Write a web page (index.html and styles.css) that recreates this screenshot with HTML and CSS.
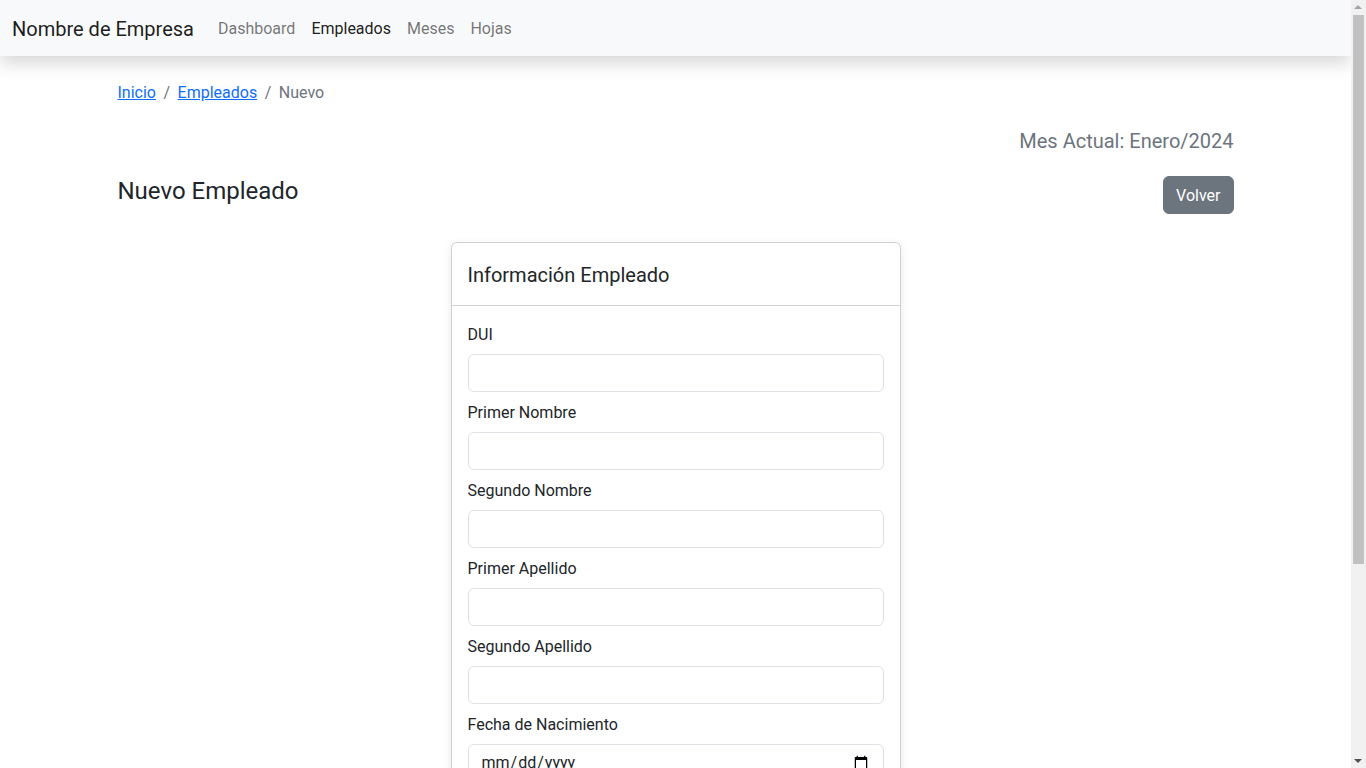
FILE: index.html
```html
<!DOCTYPE html>
<html lang="es">
<head>
<meta charset="utf-8">
<title>Nuevo Empleado</title>
<link rel="stylesheet" href="styles.css">
</head>
<body>
<nav class="navbar">
  <a class="brand" href="#">Nombre de Empresa</a>
  <ul class="nav">
    <li><a class="nav-link" href="#">Dashboard</a></li>
    <li><a class="nav-link active" href="#">Empleados</a></li>
    <li><a class="nav-link" href="#">Meses</a></li>
    <li><a class="nav-link" href="#">Hojas</a></li>
  </ul>
</nav>
<main class="container">
  <ol class="breadcrumb">
    <li><a href="#">Inicio</a></li>
    <li class="sep">/</li>
    <li><a href="#">Empleados</a></li>
    <li class="sep">/</li>
    <li class="current">Nuevo</li>
  </ol>
  <div class="month">Mes Actual: Enero/2024</div>
  <div class="title-row">
    <h1 class="title">Nuevo Empleado</h1>
    <a class="btn-secondary" href="#">Volver</a>
  </div>
  <form class="card">
    <div class="card-header"><h2>Información Empleado</h2></div>
    <div class="card-body">
      <div class="field"><label>DUI</label><input class="control" type="text"></div>
      <div class="field"><label>Primer Nombre</label><input class="control" type="text"></div>
      <div class="field"><label>Segundo Nombre</label><input class="control" type="text"></div>
      <div class="field"><label>Primer Apellido</label><input class="control" type="text"></div>
      <div class="field"><label>Segundo Apellido</label><input class="control" type="text"></div>
      <div class="field"><label>Fecha de Nacimiento</label><input class="control" type="date"></div>
      <div class="field"><label>Salario</label><input class="control" type="number"></div>
      <button class="btn-primary" type="button">Guardar</button>
    </div>
  </form>
</main>
<div class="scrollbar" aria-hidden="true">
  <span class="arrow-up"></span>
  <span class="thumb"></span>
  <span class="arrow-down"></span>
</div>
</body>
</html>
```
FILE: styles.css
```css
* { box-sizing: border-box; }
html, body { margin: 0; }
body {
  font-family: Roboto, "Noto Sans", sans-serif;
  font-size: 16px;
  line-height: 1.5;
  color: #212529;
  background: #fff;
  margin-right: 15px;
}
.navbar {
  display: flex;
  align-items: center;
  height: 56px;
  padding: 9px 12px 7px;
  background: #f8f9fa;
  box-shadow: 0 .5rem 1rem rgba(0,0,0,.15);
  position: relative;
  z-index: 2;
}
.brand {
  font-size: 20px;
  line-height: 30px;
  color: rgba(0,0,0,.9);
  text-decoration: none;
  margin-right: 16px;
}
.nav { display: flex; list-style: none; margin: 0; padding: 0; }
.nav-link {
  display: block;
  padding: 8px;
  color: rgba(0,0,0,.55);
  text-decoration: none;
}
.nav-link.active { color: rgba(0,0,0,.9); }
.container {
  max-width: 1140px;
  margin: 0 auto;
  padding: 25px 12px 48px;
}
.breadcrumb {
  display: flex;
  list-style: none;
  margin: 0 0 24px;
  padding: 0;
}
.breadcrumb a { color: #0d6efd; text-decoration: underline; }
.breadcrumb .sep { color: #6c757d; padding: 0 7.5px; }
.breadcrumb .current { color: #6c757d; }
.month {
  text-align: right;
  font-size: 20px;
  line-height: 24px;
  color: #6c757d;
  margin-bottom: 23px;
}
.title-row {
  display: flex;
  justify-content: space-between;
  align-items: flex-start;
  margin-bottom: 28px;
}
.title {
  margin: 0;
  padding-top: 1px;
  font-size: 24px;
  font-weight: 400;
  line-height: 28.8px;
}
.btn-secondary {
  display: inline-block;
  padding: 7px 12px 5px;
  line-height: 24px;
  border: 1px solid #6c757d;
  background: #6c757d;
  color: #fff;
  border-radius: 6px;
  text-decoration: none;
}
.card {
  width: 450px;
  margin: 0 auto;
  border: 1px solid rgba(0,0,0,.175);
  border-radius: 6px;
  background: #fff;
  box-shadow: 0 .125rem .5rem rgba(0,0,0,.09);
}
.card-header {
  padding: 20px 16px 18px;
  border-bottom: 1px solid rgba(0,0,0,.175);
}
.card-header h2 {
  margin: 0;
  font-size: 20px;
  font-weight: 400;
  line-height: 24px;
}
.card-body { padding: 16px; }
.field { margin-bottom: 8px; }
.field label { display: block; padding-top: 1px; margin-bottom: 7px; }
.control {
  display: block;
  width: 100%;
  height: 38px;
  padding: 6px 12px;
  font: inherit;
  color: #212529;
  border: 1px solid #dee2e6;
  border-radius: 6px;
  background: #fff;
}
.btn-primary {
  margin-top: 8px;
  padding: 6px 12px;
  font: inherit;
  color: #fff;
  background: #0d6efd;
  border: 1px solid #0d6efd;
  border-radius: 6px;
}
.scrollbar {
  position: fixed;
  top: 0;
  right: 0;
  width: 15px;
  height: 100vh;
  background: #f1f1f1;
  z-index: 10;
}
.thumb {
  position: absolute;
  left: 2px;
  right: 2px;
  top: 15px;
  height: 549px;
  background: #c1c1c1;
}
.arrow-up, .arrow-down {
  position: absolute;
  left: 3px;
  width: 0;
  height: 0;
  border-left: 4px solid transparent;
  border-right: 4px solid transparent;
}
.arrow-up { top: 5px; border-bottom: 4px solid #a3a3a3; }
.arrow-down { bottom: 5px; border-top: 4px solid #505050; }
```
